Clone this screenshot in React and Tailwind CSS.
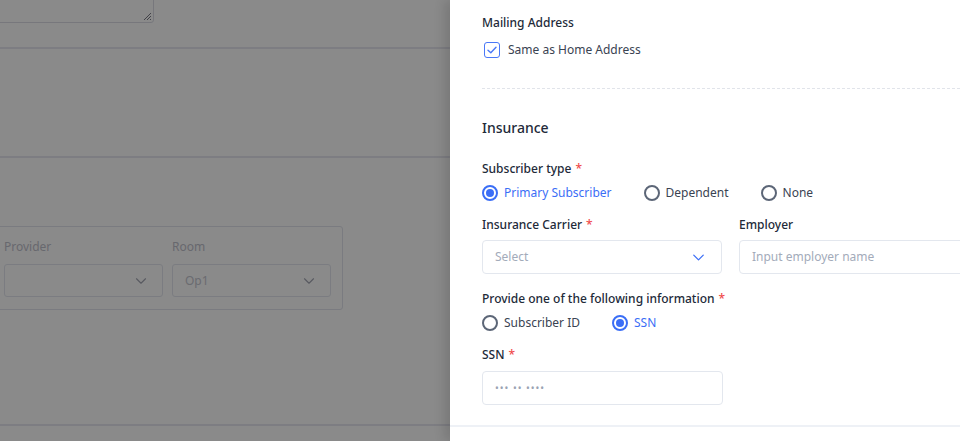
import { ChevronDown } from 'lucide-react';

const font = { fontFamily: '"Noto Sans", "Open Sans", sans-serif' };

function Req() {
  return <span className="ml-1 text-[#f04b4b]">*</span>;
}

function Radio({ checked, label }) {
  return (
    <label className="flex items-center gap-[6px]">
      <span
        className={`w-4 h-4 rounded-full border-2 flex items-center justify-center ${
          checked ? 'border-[#3b6ef6]' : 'border-[#5c6677]'
        }`}
      >
        {checked && <span className="w-2 h-2 rounded-full bg-[#3b6ef6]" />}
      </span>
      <span className={checked ? 'text-[#3b6ef6]' : 'text-[#3a4352]'}>{label}</span>
    </label>
  );
}

function BackgroundPage() {
  return (
    <div className="w-full h-full overflow-hidden bg-white">
      {/* notes textarea, cut at the top */}
      <div className="relative -mt-[40px] -ml-[10px] w-[164px] h-[63px] border border-[#dcdde6] rounded-[3px]">
        <svg className="absolute right-[1px] bottom-[1px]" width="9" height="9" viewBox="0 0 9 9">
          <path d="M8 1 L1 8 M8 4 L4 8 M8 7 L7 8" stroke="#7a7b86" strokeWidth="1" />
        </svg>
      </div>
      <div className="mt-[24px] border-t-2 border-[#e7e8f0]" />
      <div className="h-[107px]" />
      <div className="border-t-2 border-[#e7e8f0]" />

      {/* provider / room panel */}
      <div className="mt-[68px] -ml-[13px] w-[356px] h-[84px] border border-[#e1e3ec] rounded-[3px] pl-[16px] pr-[12px] pt-[10px]">
        <div className="grid grid-cols-[159px_159px] gap-x-[9px]">
          <div className="text-[12px] leading-5 text-[#bfc1cc]">Provider</div>
          <div className="text-[12px] leading-5 text-[#bfc1cc]">Room</div>
          <div className="mt-[7px] h-[33px] border border-[#e4e6ee] rounded-[3px] flex items-center justify-end pr-[12px]">
            <ChevronDown size={18} strokeWidth={1.5} className="text-[#a4a7b3]" />
          </div>
          <div className="mt-[7px] h-[33px] border border-[#e4e6ee] rounded-[3px] flex items-center justify-between pl-[12px] pr-[12px] text-[12px] text-[#c4c6d0]">
            <span>Op1</span>
            <ChevronDown size={18} strokeWidth={1.5} className="text-[#a4a7b3]" />
          </div>
        </div>
      </div>

      <div className="mt-[114px] border-t-2 border-[#e7e8f0]" />
    </div>
  );
}

export default function App() {
  return (
    <div className="relative w-[960px] h-[441px] overflow-hidden" style={font}>
      <BackgroundPage />

      {/* dim overlay */}
      <div className="absolute inset-0 bg-black/[0.46]" />

      {/* drawer */}
      <div className="absolute top-0 left-[450px] w-[560px] h-full bg-white shadow-[-6px_0_10px_rgba(0,0,0,0.12)]">
        <div className="pl-[32px] pt-[13px] text-[12px]">
          <div className="leading-5 font-medium text-[#222a39]">Mailing Address</div>
          <label className="mt-[7px] flex items-center h-5">
            <span className="ml-[2px] w-4 h-4 rounded-[3px] border-[1.5px] border-[#4a78f7] flex items-center justify-center">
              <svg width="10" height="8" viewBox="0 0 10 8" fill="none">
                <path d="M1 4.2 L3.8 6.8 L9 1.2" stroke="#4a78f7" strokeWidth="1.4" strokeLinecap="round" strokeLinejoin="round" />
              </svg>
            </span>
            <span className="ml-[8px] text-[#3a4352]">Same as Home Address</span>
          </label>
        </div>

        <div className="mt-[28px] ml-[32px] border-t border-dashed border-[#e1e4ea]" />

        <div className="pl-[32px] text-[12px]">
          <div className="mt-[28px] text-[14px] leading-[22px] font-medium text-[#222a39]">Insurance</div>

          <div className="mt-[20px] leading-5 font-medium text-[#222a39]">
            Subscriber type<Req />
          </div>
          <div className="mt-[4px] flex items-center gap-8 leading-5">
            <Radio checked label="Primary Subscriber" />
            <Radio label="Dependent" />
            <Radio label="None" />
          </div>

          <div className="mt-[12px] grid grid-cols-[240px_240px] gap-x-[17px]">
            <div className="leading-5 font-medium text-[#222a39]">
              Insurance Carrier<Req />
            </div>
            <div className="leading-5 font-medium text-[#222a39]">Employer</div>
            <div className="mt-[5px] h-[34px] border border-[#e3e7ee] rounded-[4px] flex items-center justify-between pl-[12px] pr-[13px]">
              <span className="text-[#a3abba]">Select</span>
              <ChevronDown size={19} strokeWidth={1.6} className="text-[#3b6ef6]" />
            </div>
            <div className="mt-[5px] h-[34px] border border-[#e3e7ee] rounded-[4px] flex items-center pl-[12px]">
              <span className="text-[#a3abba]">Input employer name</span>
            </div>
          </div>

          <div className="mt-[15px] leading-5 font-medium text-[#222a39]">
            Provide one of the following information<Req />
          </div>
          <div className="mt-[4px] flex items-center gap-8 leading-5">
            <Radio label="Subscriber ID" />
            <Radio checked label="SSN" />
          </div>

          <div className="mt-[12px] leading-5 font-medium text-[#222a39]">
            SSN<Req />
          </div>
          <div className="mt-[6px] w-[241px] h-[34px] border border-[#e3e7ee] rounded-[4px] flex items-center pl-[12px]">
            <span className="text-[10px] tracking-[1px] text-[#9aa3b3]">••• •• ••••</span>
          </div>
        </div>

        <div className="mt-[20px] border-t-2 border-[#eef1f6]" />
      </div>
    </div>
  );
}
